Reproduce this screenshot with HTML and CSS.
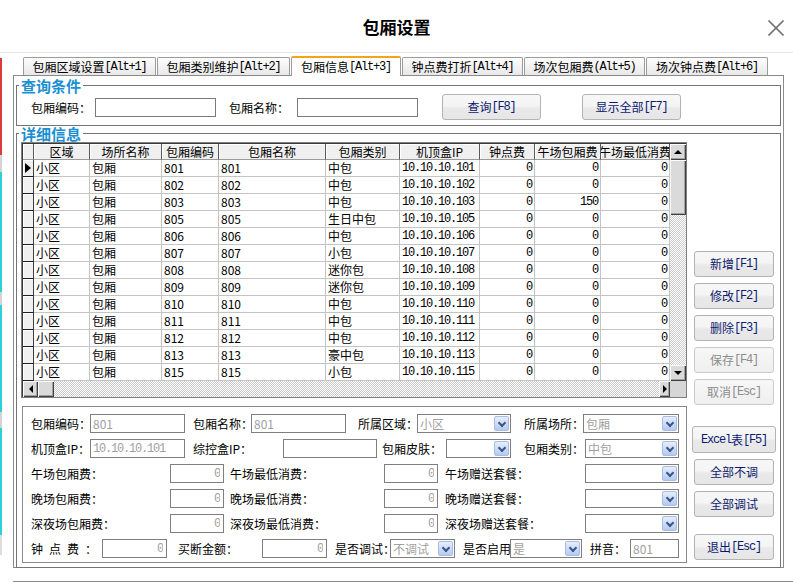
FILE: index.html
```html
<!DOCTYPE html>
<html lang="zh-CN">
<head>
<meta charset="utf-8">
<title>包厢设置</title>
<link rel="stylesheet" href="styles.css">
</head>
<body>
<div class="desk">
  <i class="strip red"></i><i class="strip g1"></i>
  <i class="strip cy1"></i><i class="strip g2"></i>
  <i class="strip cy2"></i><i class="strip g3"></i>
  <i class="strip cy3"></i><i class="strip g4"></i>
</div>
<div class="win">
  <header class="titlebar">
    <span></span>
    <h1>包厢设置</h1>
    <span class="close"><svg width="18" height="18" viewBox="0 0 18 18"><path d="M1.5 1.5 L16.5 16.5 M16.5 1.5 L1.5 16.5" stroke="#6a6a6a" stroke-width="1.6" fill="none"/></svg></span>
  </header>

  <nav class="tabs">
    <div class="tab t1">包厢区域设置<span class="m">[Alt+1]</span></div>
    <div class="tab t2">包厢类别维护<span class="m">[Alt+2]</span></div>
    <div class="tab t3 on">包厢信息<span class="m">[Alt+3]</span></div>
    <div class="tab t4">钟点费打折<span class="m">[Alt+4]</span></div>
    <div class="tab t5">场次包厢费<span class="m">(Alt+5)</span></div>
    <div class="tab t6">场次钟点费<span class="m">[Alt+6]</span></div>
  </nav>

  <section class="panel">
    <fieldset class="grp q">
      <legend>查询条件</legend>
      <div class="qrow">
        <span class="lb ql1">包厢编码：</span>
        <input class="qin" type="text" value="">
        <span class="lb ql2">包厢名称：</span>
        <input class="qin" type="text" value="">
        <button class="btn qb1">查询<span class="m">[F8]</span></button>
        <button class="btn qb2">显示全部<span class="m">[F7]</span></button>
      </div>
    </fieldset>

    <fieldset class="grp d">
      <legend>详细信息</legend>
      <div class="dbody">
        <div class="leftcol">
          <div class="grid">
            <div class="gmain">
              <div class="gh">
                <div></div><div>区域</div><div>场所名称</div><div>包厢编码</div><div>包厢名称</div><div>包厢类别</div><div>机顶盒IP</div><div>钟点费</div><div>午场包厢费</div><div>午场最低消费</div>
              </div>
              <div class="gr"><div class="ind"><i class="cur"></i></div><div>小区</div><div>包厢</div><div>801</div><div>801</div><div>中包</div><div class="m">10.10.10.101</div><div class="n m">0</div><div class="n m">0</div><div class="n m">0</div></div>
              <div class="gr"><div class="ind"></div><div>小区</div><div>包厢</div><div>802</div><div>802</div><div>中包</div><div class="m">10.10.10.102</div><div class="n m">0</div><div class="n m">0</div><div class="n m">0</div></div>
              <div class="gr"><div class="ind"></div><div>小区</div><div>包厢</div><div>803</div><div>803</div><div>中包</div><div class="m">10.10.10.103</div><div class="n m">0</div><div class="n m">150</div><div class="n m">0</div></div>
              <div class="gr"><div class="ind"></div><div>小区</div><div>包厢</div><div>805</div><div>805</div><div>生日中包</div><div class="m">10.10.10.105</div><div class="n m">0</div><div class="n m">0</div><div class="n m">0</div></div>
              <div class="gr"><div class="ind"></div><div>小区</div><div>包厢</div><div>806</div><div>806</div><div>中包</div><div class="m">10.10.10.106</div><div class="n m">0</div><div class="n m">0</div><div class="n m">0</div></div>
              <div class="gr"><div class="ind"></div><div>小区</div><div>包厢</div><div>807</div><div>807</div><div>小包</div><div class="m">10.10.10.107</div><div class="n m">0</div><div class="n m">0</div><div class="n m">0</div></div>
              <div class="gr"><div class="ind"></div><div>小区</div><div>包厢</div><div>808</div><div>808</div><div>迷你包</div><div class="m">10.10.10.108</div><div class="n m">0</div><div class="n m">0</div><div class="n m">0</div></div>
              <div class="gr"><div class="ind"></div><div>小区</div><div>包厢</div><div>809</div><div>809</div><div>迷你包</div><div class="m">10.10.10.109</div><div class="n m">0</div><div class="n m">0</div><div class="n m">0</div></div>
              <div class="gr"><div class="ind"></div><div>小区</div><div>包厢</div><div>810</div><div>810</div><div>中包</div><div class="m">10.10.10.110</div><div class="n m">0</div><div class="n m">0</div><div class="n m">0</div></div>
              <div class="gr"><div class="ind"></div><div>小区</div><div>包厢</div><div>811</div><div>811</div><div>中包</div><div class="m">10.10.10.111</div><div class="n m">0</div><div class="n m">0</div><div class="n m">0</div></div>
              <div class="gr"><div class="ind"></div><div>小区</div><div>包厢</div><div>812</div><div>812</div><div>中包</div><div class="m">10.10.10.112</div><div class="n m">0</div><div class="n m">0</div><div class="n m">0</div></div>
              <div class="gr"><div class="ind"></div><div>小区</div><div>包厢</div><div>813</div><div>813</div><div>豪中包</div><div class="m">10.10.10.113</div><div class="n m">0</div><div class="n m">0</div><div class="n m">0</div></div>
              <div class="gr"><div class="ind"></div><div>小区</div><div>包厢</div><div>815</div><div>815</div><div>小包</div><div class="m">10.10.10.115</div><div class="n m">0</div><div class="n m">0</div><div class="n m">0</div></div>
              <div class="hs">
                <div class="sbb hl"><i class="ar-l"></i></div>
                <div class="sbb hthumb"></div>
                <div class="track"></div>
                <div class="sbb hr"><i class="ar-r"></i></div>
              </div>
            </div>
            <div class="vs">
              <div class="sbb vb"><i class="ar-u"></i></div>
              <div class="sbb vthumb"></div>
              <div class="track"></div>
              <div class="sbb vb"><i class="ar-d"></i></div>
              <div class="corner"></div>
            </div>
          </div>

          <div class="form">
            <div class="frow">
              <span class="lb w59">包厢编码：</span>
              <input class="fld w95" type="text" value="801" readonly>
              <span class="lb ml8 w58">包厢名称：</span>
              <input class="fld w95" type="text" value="801" readonly>
              <span class="lb ml12 w59">所属区域：</span>
              <div class="sel w94"><span class="v">小区</span><span class="dd"></span></div>
              <span class="lb ml13 w59">所属场所：</span>
              <div class="sel w96"><span class="v">包厢</span><span class="dd"></span></div>
            </div>
            <div class="frow">
              <span class="lb w59">机顶盒IP：</span>
              <input class="fld m w95" type="text" value="10.10.10.101" readonly>
              <span class="lb ml8 w90">综控盒IP：</span>
              <input class="fld w94" type="text" value="">
              <span class="lb ml5 w64">包厢皮肤：</span>
              <div class="sel w65"><span class="v"></span><span class="dd"></span></div>
              <span class="lb ml13 w61">包厢类别：</span>
              <div class="sel w94"><span class="v">中包</span><span class="dd"></span></div>
            </div>
            <div class="frow">
              <span class="lb w139">午场包厢费：</span>
              <input class="fld num m w54" type="text" value="0">
              <span class="lb ml6 w154">午场最低消费：</span>
              <input class="fld num m w54" type="text" value="0">
              <span class="lb ml7 w140">午场赠送套餐：</span>
              <div class="sel w94"><span class="v"></span><span class="dd"></span></div>
            </div>
            <div class="frow">
              <span class="lb w139">晚场包厢费：</span>
              <input class="fld num m w54" type="text" value="0">
              <span class="lb ml6 w154">晚场最低消费：</span>
              <input class="fld num m w54" type="text" value="0">
              <span class="lb ml7 w140">晚场赠送套餐：</span>
              <div class="sel w94"><span class="v"></span><span class="dd"></span></div>
            </div>
            <div class="frow">
              <span class="lb w139">深夜场包厢费：</span>
              <input class="fld num m w54" type="text" value="0">
              <span class="lb ml6 w154">深夜场最低消费：</span>
              <input class="fld num m w54" type="text" value="0">
              <span class="lb ml7 w140">深夜场赠送套餐：</span>
              <div class="sel w94"><span class="v"></span><span class="dd"></span></div>
            </div>
            <div class="frow">
              <span class="lb w71 spaced">钟点费：</span>
              <input class="fld num m w65" type="text" value="0">
              <span class="lb ml11 w84">买断金额：</span>
              <input class="fld num m w65" type="text" value="0">
              <span class="lb ml8 w55">是否调试：</span>
              <div class="sel w65"><span class="v">不调试</span><span class="dd"></span></div>
              <span class="lb ml8 w47">是否启用</span>
              <div class="sel w72"><span class="v">是</span><span class="dd"></span></div>
              <span class="lb ml8 w40">拼音：</span>
              <input class="fld w49" type="text" value="801" readonly>
            </div>
          </div>
        </div>

        <div class="side">
          <button class="btn">新增<span class="m">[F1]</span></button>
          <button class="btn">修改<span class="m">[F2]</span></button>
          <button class="btn">删除<span class="m">[F3]</span></button>
          <button class="btn" disabled>保存<span class="m">[F4]</span></button>
          <button class="btn" disabled>取消<span class="m">[Esc]</span></button>
          <button class="btn excel"><span class="m">Excel</span>表<span class="m">[F5]</span></button>
          <button class="btn">全部不调</button>
          <button class="btn">全部调试</button>
          <button class="btn quit">退出<span class="m">[Esc]</span></button>
        </div>
      </div>
    </fieldset>
  </section>
  <div class="bline"></div>
</div>
</body>
</html>
```

FILE: styles.css
```css
* { box-sizing: border-box; }

body {
  margin: 0;
  width: 793px;
  height: 582px;
  overflow: hidden;
  background: #fff;
  font-family: "Noto Sans CJK SC", "Noto Sans", sans-serif;
  font-size: 12px;
  color: #000;
  position: relative;
}

/* background windows peeking at the left edge */
.desk { position: absolute; left: 0; top: 0; width: 2px; height: 582px; z-index: 5; }
.strip { position: absolute; left: 0; width: 2px; display: block; }
.red { top: 58px; height: 97px; background: #dc3b3b; }
.g1 { top: 155px; height: 17px; background: #d3d3d3; }
.cy1 { top: 172px; height: 120px; background: #2fcfd9; }
.g2 { top: 292px; height: 13px; background: #d3d3d3; }
.cy2 { top: 305px; height: 107px; background: #2fcfd9; }
.g3 { top: 412px; height: 16px; background: #d3d3d3; }
.cy3 { top: 428px; height: 107px; background: #2fcfd9; }
.g4 { top: 535px; height: 20px; background: #dcdcdc; }

.m {
  font-family: "Liberation Mono", monospace;
  font-size: 12px;
  letter-spacing: -1.2px;
}

/* title bar */
.titlebar {
  height: 53px;
  border-bottom: 1px solid #e4e4e4;
  display: grid;
  grid-template-columns: 1fr auto 1fr;
  align-items: center;
}
.titlebar h1 {
  margin: 0;
  font-size: 17px;
  font-weight: bold;
  line-height: 20px;
  padding-top: 2px;
}
.close {
  justify-self: end;
  margin-right: 8px;
  width: 18px;
  height: 18px;
  margin-top: 3px;
}
.close svg { display: block; }

/* tabs */
.tabs {
  display: flex;
  align-items: flex-end;
  height: 18px;
  margin: 4px 0 0 23px;
  position: relative;
  z-index: 1;
}
.tab {
  height: 18px;
  border: 1px solid #9c9c9c;
  border-bottom: none;
  border-radius: 2px 2px 0 0;
  background: linear-gradient(#fdfdfd, #e8e8e8);
  margin-right: 1px;
  display: flex;
  align-items: center;
  justify-content: center;
  line-height: 16px;
  white-space: nowrap;
}
.tab.on {
  height: 20px;
  margin-bottom: -1px;
  background: #fff;
  border-top: 2px solid #f2a516;
}
.t1, .t2 { width: 133px; }
.t3 { width: 110px; }
.t4, .t5 { width: 121px; }
.t6 { width: 122px; }

/* tab panel */
.panel {
  margin-left: 13px;
  width: 771px;
  height: 493px;
  border: 1px solid #8a8a8a;
  padding: 1px 2px 3px;
}

.grp {
  margin: 0;
  padding: 0;
  border: 1px solid #747474;
  min-width: 0;
}
.grp legend {
  margin-left: 2px;
  padding: 0 2px;
  font-size: 15px;
  line-height: 15px;
  font-weight: bold;
  color: #1b8fd2;
}
.q { margin-top: 1px; }

.qrow {
  display: flex;
  align-items: center;
  height: 26px;
  margin: 1px 0 5px;
  padding-left: 14px;
}
.lb { flex: none; white-space: nowrap; line-height: 19px; }
.ql1 { width: 64px; }
.ql2 { width: 68px; margin-left: 13px; }
.qin {
  width: 121px;
  height: 19px;
  border: 1px solid #7a7a7a;
  padding: 0 2px;
  font-family: inherit;
  font-size: 12px;
  outline: none;
}

/* buttons */
.btn {
  height: 26px;
  border: 1px solid #b3b3b3;
  border-radius: 3px;
  background: linear-gradient(#f7f7f7 0, #f4f4f4 46%, #e9e9e9 54%, #e6e6e6 100%);
  color: #0d1a70;
  font-family: inherit;
  font-size: 12px;
  line-height: 16px;
  padding: 0;
  display: flex;
  align-items: center;
  justify-content: center;
  white-space: nowrap;
}
.btn:disabled {
  color: #8c8c8c;
  border-color: #cacaca;
  background: linear-gradient(#f7f7f7, #efefef);
}
.qb1 { width: 99px; margin-left: 24px; }
.qb2 { width: 99px; margin-left: 41px; }

/* details */
.dbody {
  display: flex;
  padding: 1px 0 1px 4px;
}
.leftcol { width: 666px; }

.grid {
  width: 666px;
  height: 256px;
  border: 1px solid #7f7f7f;
  padding: 1px 0 0 1px;
  box-shadow: inset 1px 1px 0 #3a3a3a;
  display: flex;
  background: #fff;
}
.gmain {
  width: 647px;
  display: flex;
  flex-direction: column;
  overflow: hidden;
}
.gh, .gr {
  display: grid;
  grid-template-columns: 11px 56px 72px 57px 107px 74px 80px 55px 66px 69px;
}
.gh { height: 16px; }
.gh > div {
  background: #f0f0f0;
  border-right: 1px solid #5a5a5a;
  border-bottom: 1px solid #9a9a9a;
  box-shadow: inset 1px 1px 0 #fff;
  display: flex;
  justify-content: center;
  align-items: center;
  line-height: 15px;
  overflow: hidden;
  white-space: nowrap;
}
.gr { height: 17px; }
.gr > div {
  border-right: 1px solid #c4c4c4;
  border-bottom: 1px solid #c4c4c4;
  padding-left: 2px;
  line-height: 16px;
  white-space: nowrap;
  overflow: hidden;
}
.gr > .ind {
  background: #f0f0f0;
  border-right: 1px solid #404040;
  border-bottom: 1px solid #1e1e1e;
  box-shadow: inset 1px 1px 0 #fff;
  padding: 0;
  display: flex;
  align-items: center;
  justify-content: center;
}
.gr > .n { text-align: right; padding-left: 0; padding-right: 2px; }
.cur {
  display: block;
  width: 0;
  height: 0;
  border-left: 6px solid #000;
  border-top: 5px solid transparent;
  border-bottom: 5px solid transparent;
}

/* scrollbars */
.sbb {
  background: #dadada;
  box-shadow: inset 1px 1px 0 #fbfbfb, inset -1px -1px 0 #404040, inset -2px -2px 0 #a2a2a2;
  display: flex;
  align-items: center;
  justify-content: center;
  flex: none;
}
.track {
  flex: 1;
  background: repeating-conic-gradient(#ffffff 0 25%, #cdcdcd 0 50%) 0 0 / 2px 2px;
}
.hs { display: flex; height: 16px; }
.hl { width: 15px; }
.hthumb { width: 16px; }
.hr { width: 11px; }
.vs { width: 16px; display: flex; flex-direction: column; }
.vb { height: 16px; }
.vthumb { height: 55px; }
.corner { height: 16px; background: #d6d6d6; flex: none; }
.ar-l, .ar-r, .ar-u, .ar-d { display: block; width: 0; height: 0; }
.ar-l { border-right: 4px solid #000; border-top: 4px solid transparent; border-bottom: 4px solid transparent; }
.ar-r { border-left: 4px solid #000; border-top: 4px solid transparent; border-bottom: 4px solid transparent; }
.ar-u { border-bottom: 4px solid #000; border-left: 4px solid transparent; border-right: 4px solid transparent; }
.ar-d { border-top: 4px solid #000; border-left: 4px solid transparent; border-right: 4px solid transparent; }

/* lower form */
.form {
  margin: 8px 0 0 1px;
  width: 665px;
  height: 157px;
  border: 1px solid #8a8a8a;
  padding: 7px 0 0 8px;
}
.frow {
  display: flex;
  align-items: center;
  height: 19px;
  margin-bottom: 6px;
}
.fld {
  flex: none;
  height: 19px;
  border: 1px solid #7f7f7f;
  padding: 0 2px;
  font-family: inherit;
  font-size: 12px;
  color: #a0a0a0;
  background: #fff;
  outline: none;
}
.fld.m {
  font-family: "Liberation Mono", monospace;
  font-size: 12px;
  letter-spacing: -1.2px;
}
.fld.num { text-align: right; padding-right: 3px; }
.sel {
  flex: none;
  display: flex;
  align-items: center;
  height: 19px;
  border: 1px solid #7f7f7f;
  padding: 0 1px 0 2px;
  background: #fff;
  color: #a0a0a0;
  line-height: 17px;
}
.sel .v { flex: 1; overflow: hidden; white-space: nowrap; }
.dd {
  flex: none;
  width: 15px;
  height: 15px;
  border: 1px solid #a7bde6;
  border-radius: 2px;
  background: linear-gradient(#e6eefc, #b5caf1);
  display: flex;
  align-items: center;
  justify-content: center;
}
.dd::before {
  content: "";
  width: 4px;
  height: 4px;
  border-right: 2px solid #3a5688;
  border-bottom: 2px solid #3a5688;
  transform: translateY(-1px) rotate(45deg);
}
.spaced { letter-spacing: 6px; }

.w40 { width: 40px; } .w47 { width: 47px; } .w49 { width: 49px; }
.w54 { width: 54px; } .w55 { width: 55px; } .w58 { width: 58px; }
.w59 { width: 59px; } .w61 { width: 61px; } .w64 { width: 64px; }
.w65 { width: 65px; } .w71 { width: 71px; } .w72 { width: 72px; }
.w84 { width: 84px; } .w90 { width: 90px; } .w94 { width: 94px; }
.w95 { width: 95px; } .w96 { width: 96px; } .w139 { width: 139px; }
.w140 { width: 140px; } .w154 { width: 154px; }
.ml5 { margin-left: 5px; } .ml6 { margin-left: 6px; } .ml7 { margin-left: 7px; }
.ml8 { margin-left: 8px; } .ml11 { margin-left: 11px; } .ml12 { margin-left: 12px; }
.ml13 { margin-left: 13px; }

/* right-hand buttons */
.side {
  width: 80px;
  margin-left: 7px;
  padding-top: 109px;
  display: flex;
  flex-direction: column;
}
.side .btn { width: 80px; height: 26px; margin-bottom: 6px; flex: none; }
.side .excel { width: 84px; height: 27px; margin-left: -2px; margin-top: 15px; }
.side .quit { margin-top: 11px; }

.bline {
  margin: 13px 0 0 13px;
  border-top: 1px solid #8a8a8a;
}
```
